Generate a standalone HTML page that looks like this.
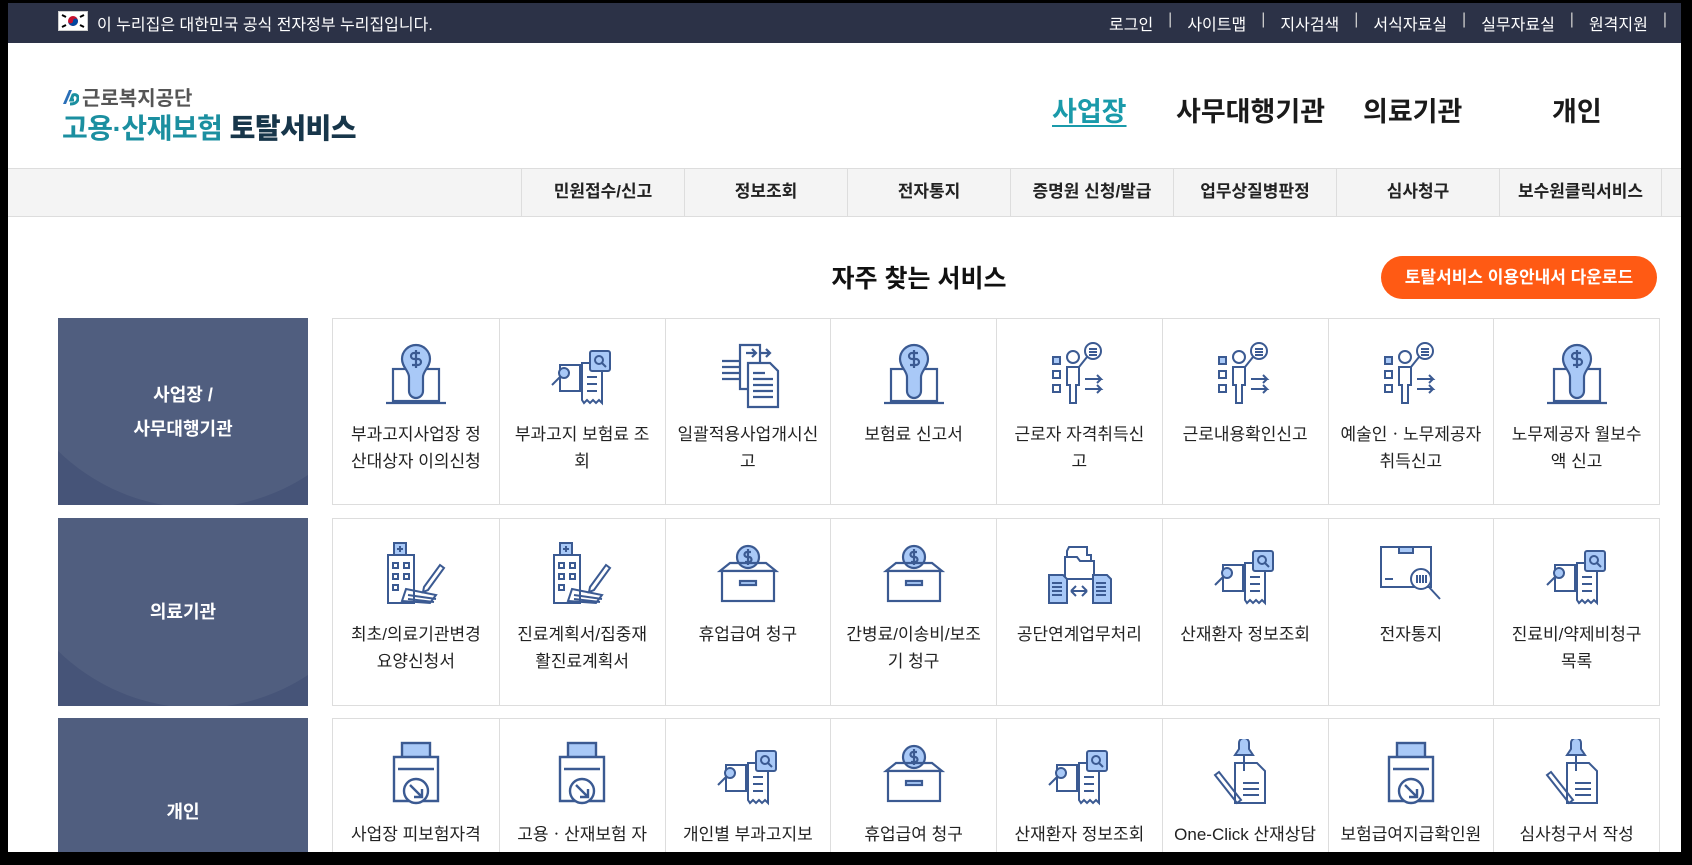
<!DOCTYPE html>
<html><head><meta charset="utf-8">
<style>
*{margin:0;padding:0;box-sizing:border-box}
body{width:1692px;height:865px;background:#000;overflow:hidden;font-family:"Liberation Sans","Noto Sans CJK KR",sans-serif;position:relative}
#page{position:absolute;left:8px;top:3px;width:1673px;height:849px;background:#fff;overflow:hidden}
.top{position:absolute;left:0;top:0;width:100%;height:40px;background:#2c3247;color:#fff;font-size:16px}
.flag{position:absolute;left:50px;top:8px;width:30px;height:20px;background:#fff;border:1px solid #ccc}
.top .msg{position:absolute;left:89px;top:8px}
.top .links{position:absolute;right:14px;top:8px;display:flex;gap:0}
.top .links span{padding:0 15px}
.top .links i{font-style:normal;color:#ccc}
.logo1{position:absolute;left:53px;top:79px;font-size:20px;color:#555;font-weight:bold;display:flex;align-items:center;gap:3px}
.logo2{position:absolute;left:54px;top:104px;font-size:28px;font-weight:bold;color:#1b8fa0;letter-spacing:-0.5px}
.logo2 b{color:#17364a}
.gnb a{position:absolute;top:87px;font-size:27px;font-weight:bold;color:#1a1a1a;text-decoration:none}
.sub{position:absolute;left:0;top:165px;width:100%;height:49px;background:#f4f4f4;border-top:1px solid #ddd;border-bottom:1px solid #ddd}
.sub div{position:absolute;top:0;height:47px;width:163px;border-left:1px solid #ddd;text-align:center;line-height:46px;font-size:17px;font-weight:bold;color:#222}
.title{position:absolute;left:0;width:1822px;text-align:center;top:256px;font-size:25px;font-weight:bold;color:#111}
.btn{position:absolute;left:1373px;top:253px;width:276px;height:43px;border-radius:22px;background:#ff5a14;color:#fff;font-size:17px;font-weight:bold;text-align:center;line-height:43px}
.lbl{position:absolute;left:50px;width:250px;background:#465478;color:#fff;font-size:18px;font-weight:bold;display:flex;align-items:center;justify-content:center;text-align:center;line-height:34px;overflow:hidden}
.lbl:before{content:"";position:absolute;left:-60px;top:-210px;width:400px;height:400px;border-radius:50%;background:rgba(255,255,255,0.06)}
.lbl span{position:relative}
.grid{position:absolute;left:324px;width:1328px;border:1px solid #ddd;display:flex;background:#fff}
.cell{width:166px;border-left:1px solid #ddd;text-align:center;padding-top:20px;font-size:17px;color:#222;line-height:27px}
.cell:first-child{border-left:none}
.cell svg{display:block;margin:0 auto 12px;width:72px;height:70px}
</style></head><body>
<svg width="0" height="0" style="position:absolute">
<defs>
<symbol id="coin" viewBox="0 0 72 70"><g fill="none" stroke="#3b5a92" stroke-width="2.2"><rect x="13" y="30" width="46" height="32"/><path d="M6 64h60"/><path d="M36 6a14 14 0 0 1 14 14c0 8-7 12-7 18v14a7 7 0 0 1-14 0V38c0-6-7-10-7-18A14 14 0 0 1 36 6z" fill="#a9c9f7"/><path d="M40 14h-6a3 3 0 0 0 0 6h4a3 3 0 0 1 0 6h-6M36 11v18"/></g></symbol>
<symbol id="docs" viewBox="0 0 72 70"><g fill="none" stroke="#3b5a92" stroke-width="2"><path d="M14 26h20v26H14z"/><circle cx="18" cy="34" r="5" fill="#a9c9f7"/><path d="M14 38l-8 8"/><path d="M36 24h20v40l-3-3-3 3-3-3-3 3-3-3-3 3-2-3z"/><path d="M41 38h10M41 45h10M41 52h10"/><rect x="44" y="12" width="20" height="20" rx="2" fill="#a9c9f7"/><circle cx="53" cy="21" r="4"/><path d="M56 24l4 4"/></g></symbol>
<symbol id="docarr" viewBox="0 0 72 70"><g fill="none" stroke="#3b5a92" stroke-width="2.2"><path d="M28 6h20v44H28z"/><path d="M36 60V24h22l8 8v36H36z" fill="#fff"/><path d="M41 34h12M41 40h20M41 46h20M41 52h20M41 58h20M10 22h18M10 28h18M10 34h18M10 40h18M34 14h10M40 10l4 4-4 4M48 14h10M54 10l4 4-4 4"/></g></symbol>
<symbol id="person" viewBox="0 0 72 70"><g fill="none" stroke="#3b5a92" stroke-width="2"><rect x="10" y="18" width="7" height="7" fill="#a9c9f7"/><rect x="10" y="32" width="7" height="7"/><rect x="10" y="46" width="7" height="7"/><circle cx="30" cy="18" r="6"/><path d="M24 28h12v18h-3v18h-6V46h-3z"/><circle cx="50" cy="12" r="8"/><path d="M46 10h8M46 13h8M46 16h8M44 18l-8 10M42 40h16l-4-4M58 40l-4 4M42 50h16l-4-4M58 50l-4 4"/></g></symbol>
<symbol id="hosp" viewBox="0 0 72 70"><g fill="none" stroke="#3b5a92" stroke-width="2"><rect x="14" y="4" width="12" height="12" fill="#a9c9f7"/><path d="M20 7v6M17 10h6"/><rect x="8" y="16" width="26" height="48"/><path d="M13 24h5v5h-5zM24 24h5v5h-5zM13 35h5v5h-5zM24 35h5v5h-5zM13 46h5v5h-5z"/><path d="M26 50l30 6-6 8-28-2zM28 56l28 4M28 60l26 3"/><path d="M44 48l16-22 4 3-16 22-5 2z" fill="#fff"/></g></symbol>
<symbol id="box" viewBox="0 0 72 70"><g fill="none" stroke="#3b5a92" stroke-width="2.2"><circle cx="36" cy="18" r="11" fill="#a9c9f7"/><path d="M39 13h-4a2.5 2.5 0 0 0 0 5h2a2.5 2.5 0 0 1 0 5h-4M36 10v16"/><path d="M8 32l10-8h36l10 8z"/><rect x="10" y="32" width="52" height="30" fill="#fff"/><rect x="28" y="42" width="16" height="4" fill="#a9c9f7"/></g></symbol>
<symbol id="folder" viewBox="0 0 72 70"><g fill="none" stroke="#3b5a92" stroke-width="2"><path d="M26 8h18v8h4v22H24V12z"/><path d="M22 18h12l3 4h14v18H22z" fill="#fff"/><path d="M6 36h14l4 4v24H6zM50 36h14l4 4v24H50z" fill="#a9c9f7"/><path d="M9 44h10M9 48h10M9 52h10M9 56h10M53 44h10M53 48h10M53 52h10M53 56h10"/><path d="M28 52h16M28 52l5-5M28 52l5 5M44 52l-5-5M44 52l-5 5"/></g></symbol>
<symbol id="boxs" viewBox="0 0 72 70"><g fill="none" stroke="#3b5a92" stroke-width="2"><rect x="6" y="8" width="50" height="40"/><rect x="24" y="8" width="14" height="6" fill="#a9c9f7"/><path d="M10 40h8"/><circle cx="46" cy="40" r="10" fill="#fff"/><path d="M42 36v8M45 36v8M48 36v8M51 36v8M53 47l12 13"/></g></symbol>
<symbol id="fax" viewBox="0 0 72 70"><g fill="none" stroke="#3b5a92" stroke-width="2.4"><rect x="22" y="4" width="28" height="22" fill="#a9c9f7"/><path d="M14 18h44v44H14z" fill="#fff"/><path d="M18 30h36"/><circle cx="36" cy="52" r="12" fill="#fff"/><path d="M30 46l12 12M42 50v8h-8"/></g></symbol>
<symbol id="pen" viewBox="0 0 72 70"><g fill="none" stroke="#3b5a92" stroke-width="2"><path d="M30 4a5 5 0 0 1 10 0v6l4 6H26l4-6z" fill="#a9c9f7"/><path d="M35 16v16"/><path d="M26 24h22l8 8v32H26z"/><path d="M34 44h16M34 50h16M34 56h16"/><path d="M6 36l4-3 22 28-4 3z"/></g></symbol>
</defs></svg>
<div id="page">
<div class="top">
 <div class="flag"><svg width="28" height="18" viewBox="0 0 28 18"><circle cx="14" cy="9" r="5" fill="#c8102e"/><path d="M9 9a5 5 0 0 0 10 0a2.5 2.5 0 0 0-5 0a2.5 2.5 0 0 1-5 0" fill="#0047a0"/><path d="M3 3l4 2M3 15l4-2M25 3l-4 2M25 15l-4-2" stroke="#000" stroke-width="2"/></svg></div>
 <div class="msg">이 누리집은 대한민국 공식 전자정부 누리집입니다.</div>
 <div class="links"><span>로그인</span><i>|</i><span>사이트맵</span><i>|</i><span>지사검색</span><i>|</i><span>서식자료실</span><i>|</i><span>실무자료실</span><i>|</i><span>원격지원</span><i>|</i></div>
</div>
<div class="logo1"><svg width="18" height="18" viewBox="0 0 18 18"><path d="M2 16L8 2h3L5 16z" fill="#2a6fb8"/><path d="M9 16c6 0 8-3 8-6 0-3-3-4-5-3l-2 5h3" fill="none" stroke="#1b8fa0" stroke-width="3"/></svg>근로복지공단</div>
<div class="logo2">고용·산재보험 <b>토탈서비스</b></div>
<div class="gnb">
 <a style="left:1044px;color:#1a9aaa;text-decoration:underline;text-underline-offset:4px">사업장</a>
 <a style="left:1168px">사무대행기관</a>
 <a style="left:1355px">의료기관</a>
 <a style="left:1544px">개인</a>
</div>
<div class="sub">
 <div style="left:513px">민원접수/신고</div><div style="left:676px">정보조회</div><div style="left:839px">전자통지</div><div style="left:1002px">증명원 신청/발급</div><div style="left:1165px">업무상질병판정</div><div style="left:1328px">심사청구</div><div style="left:1491px;border-right:1px solid #ddd">보수원클릭서비스</div>
</div>
<div class="title">자주 찾는 서비스</div>
<div class="btn">토탈서비스 이용안내서 다운로드</div>

<div class="lbl" style="top:315px;height:187px"><span>사업장 /<br>사무대행기관</span></div>
<div class="grid" style="top:315px;height:187px">
 <div class="cell"><svg><use href="#coin"/></svg>부과고지사업장 정<br>산대상자 이의신청</div>
 <div class="cell"><svg><use href="#docs"/></svg>부과고지 보험료 조<br>회</div>
 <div class="cell"><svg><use href="#docarr"/></svg>일괄적용사업개시신<br>고</div>
 <div class="cell"><svg><use href="#coin"/></svg>보험료 신고서</div>
 <div class="cell"><svg><use href="#person"/></svg>근로자 자격취득신<br>고</div>
 <div class="cell"><svg><use href="#person"/></svg>근로내용확인신고</div>
 <div class="cell"><svg><use href="#person"/></svg>예술인ㆍ노무제공자<br>취득신고</div>
 <div class="cell"><svg><use href="#coin"/></svg>노무제공자 월보수<br>액 신고</div>
</div>

<div class="lbl" style="top:515px;height:188px"><span>의료기관</span></div>
<div class="grid" style="top:515px;height:188px">
 <div class="cell"><svg><use href="#hosp"/></svg>최초/의료기관변경<br>요양신청서</div>
 <div class="cell"><svg><use href="#hosp"/></svg>진료계획서/집중재<br>활진료계획서</div>
 <div class="cell"><svg><use href="#box"/></svg>휴업급여 청구</div>
 <div class="cell"><svg><use href="#box"/></svg>간병료/이송비/보조<br>기 청구</div>
 <div class="cell"><svg><use href="#folder"/></svg>공단연계업무처리</div>
 <div class="cell"><svg><use href="#docs"/></svg>산재환자 정보조회</div>
 <div class="cell"><svg><use href="#boxs"/></svg>전자통지</div>
 <div class="cell"><svg><use href="#docs"/></svg>진료비/약제비청구<br>목록</div>
</div>

<div class="lbl" style="top:715px;height:188px"><span>개인</span></div>
<div class="grid" style="top:715px;height:188px">
 <div class="cell"><svg><use href="#fax"/></svg>사업장 피보험자격<br>신고현황</div>
 <div class="cell"><svg><use href="#fax"/></svg>고용ㆍ산재보험 자<br>격 이력 내역서</div>
 <div class="cell"><svg><use href="#docs"/></svg>개인별 부과고지보<br>험료 조회</div>
 <div class="cell"><svg><use href="#box"/></svg>휴업급여 청구</div>
 <div class="cell"><svg><use href="#docs"/></svg>산재환자 정보조회</div>
 <div class="cell"><svg><use href="#pen"/></svg>One-Click 산재상담<br>및 신청</div>
 <div class="cell"><svg><use href="#fax"/></svg>보험급여지급확인원</div>
 <div class="cell"><svg><use href="#pen"/></svg>심사청구서 작성</div>
</div>
</div>
</body></html>
